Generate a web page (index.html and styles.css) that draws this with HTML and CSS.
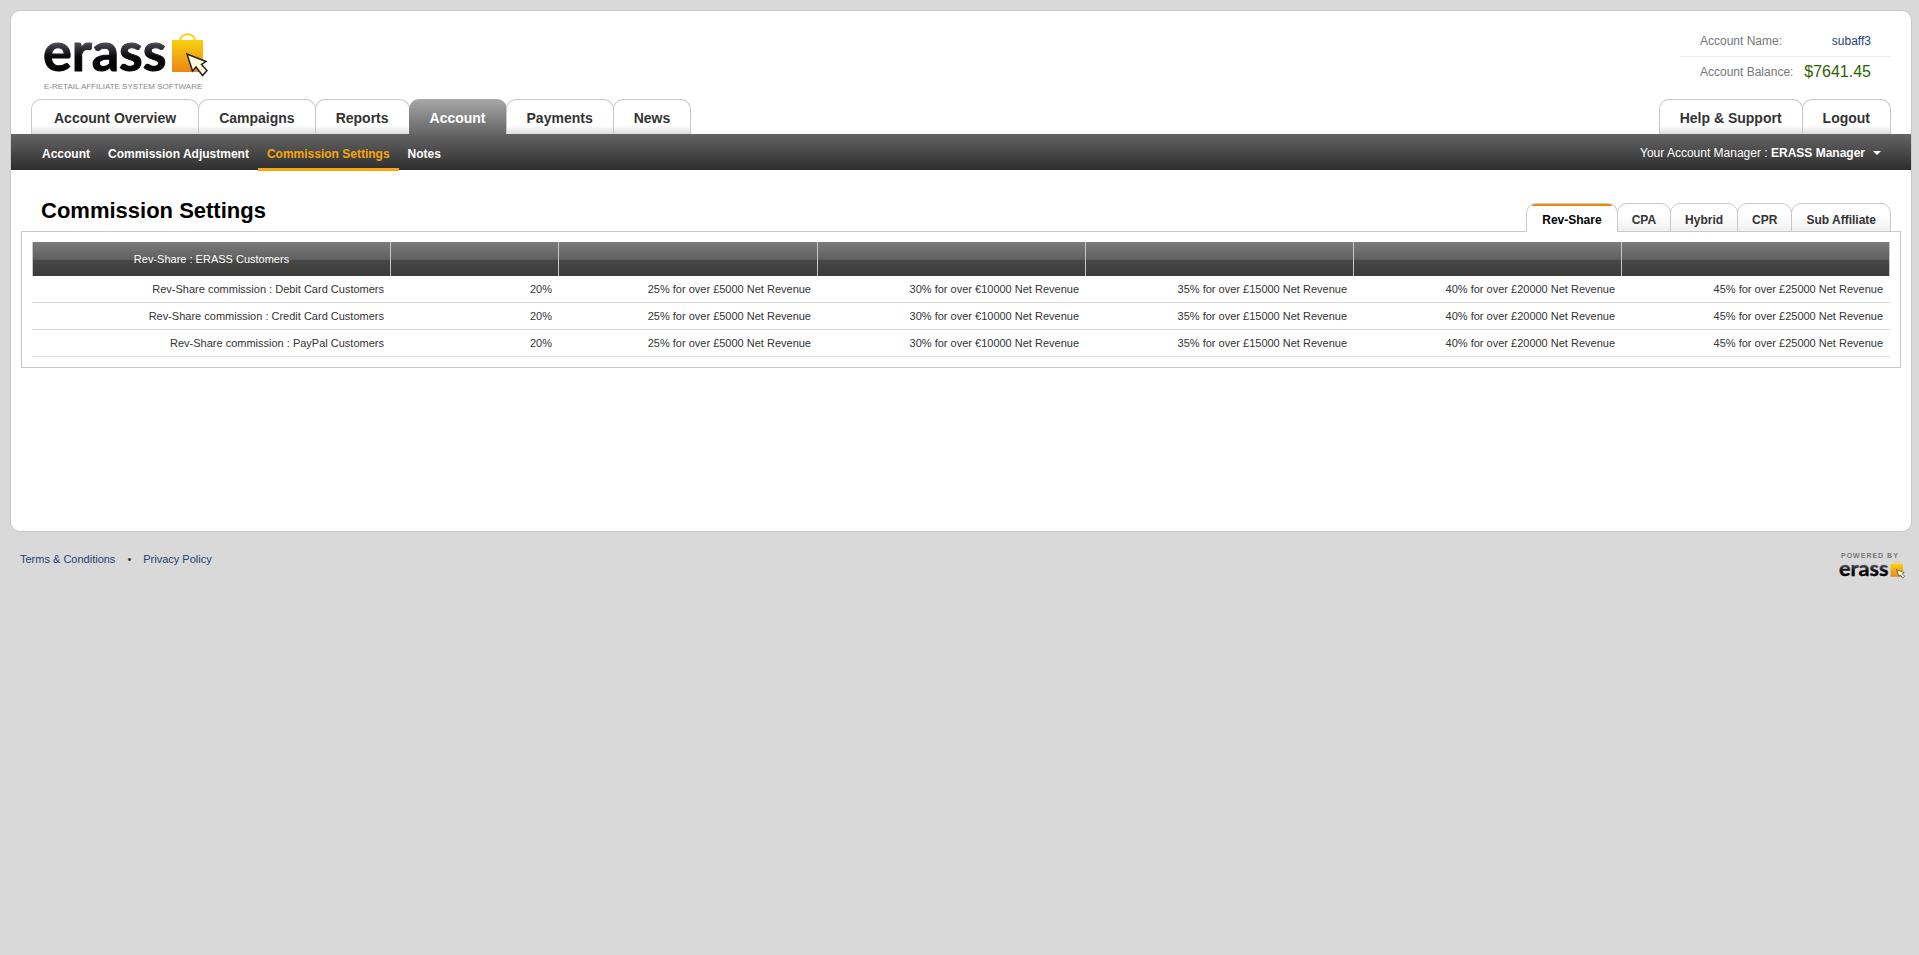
FILE: index.html
```html
<!DOCTYPE html>
<html lang="en">
<head>
  <meta charset="UTF-8">
  <meta name="viewport" content="width=device-width, initial-scale=1.0">
  <title>Commission Settings - ERASS</title>
  <link rel="stylesheet" href="styles.css">
</head>
<body>
  <div class="panel">
    <!-- Header -->
    <header class="header">
      <div class="header-top">
        <a href="#" class="logo">
          <svg class="logo-mark" viewBox="0 0 170 50" aria-label="erass" role="img">
            <defs>
              <linearGradient id="ink" x1="0" y1="0" x2="0" y2="1">
                <stop offset="0.35" stop-color="#54565b"/>
                <stop offset="0.6" stop-color="#08080a"/>
                <stop offset="1" stop-color="#000"/>
              </linearGradient>
              <linearGradient id="bag" x1="0" y1="0" x2="0" y2="1">
                <stop offset="0" stop-color="#f8d010"/>
                <stop offset="1" stop-color="#ec8615"/>
              </linearGradient>
            </defs>
            <text class="logo-word" x="0" y="41" fill="url(#ink)" stroke="url(#ink)">erass</text>
            <g id="shopping-bag">
              <path d="M137 11c0-9 15-9 15 0" fill="none" stroke="#f5d414" stroke-width="2"/>
              <path d="M129 10h31v32h-31z" fill="url(#bag)"/>
              <path d="M144 24l5.500 17 3.500-4 6.500 8.500 4.500-5-5.500-6 4.500-3z" fill="#fdf9dc" stroke="#222" stroke-width="1.500"/>
            </g>
          </svg>
          <span class="logo-tagline">E-RETAIL AFFILIATE SYSTEM SOFTWARE</span>
        </a>
        <dl class="account-info">
          <div class="account-row">
            <dt>Account Name:</dt>
            <dd><a href="#">subaff3</a></dd>
          </div>
          <div class="account-row">
            <dt>Account Balance:</dt>
            <dd class="balance">$7641.45</dd>
          </div>
        </dl>
      </div>
      <div class="tab-bar">
        <nav class="tabs">
          <a href="#" class="tab-wide">Account Overview</a>
          <a href="#">Campaigns</a>
          <a href="#">Reports</a>
          <a href="#" class="active">Account</a>
          <a href="#">Payments</a>
          <a href="#">News</a>
        </nav>
        <nav class="tabs">
          <a href="#">Help &amp; Support</a>
          <a href="#">Logout</a>
        </nav>
      </div>
    </header>

    <!-- Sub navigation -->
    <div class="subbar">
      <nav class="subnav">
        <a href="#">Account</a>
        <a href="#">Commission Adjustment</a>
        <a href="#" class="active">Commission Settings</a>
        <a href="#">Notes</a>
      </nav>
      <button type="button" class="manager">
        <span>Your Account Manager : <b>ERASS Manager</b></span>
        <svg class="caret" viewBox="0 0 8 4"><path d="M0 0h8L4 4z" fill="#fff"/></svg>
      </button>
    </div>

    <!-- Content -->
    <main class="content">
      <div class="content-head">
        <h1>Commission Settings</h1>
        <nav class="page-tabs">
          <a href="#" class="active">Rev-Share</a>
          <a href="#">CPA</a>
          <a href="#">Hybrid</a>
          <a href="#">CPR</a>
          <a href="#">Sub Affiliate</a>
        </nav>
      </div>
      <div class="box">
        <table class="commission">
          <colgroup>
            <col class="col-name">
            <col class="col-rate">
            <col class="col-first">
            <col span="4">
          </colgroup>
          <thead>
            <tr>
              <th>Rev-Share : ERASS Customers</th>
              <th></th>
              <th></th>
              <th></th>
              <th></th>
              <th></th>
              <th></th>
            </tr>
          </thead>
          <tbody>
            <tr>
              <td>Rev-Share commission : Debit Card Customers</td>
              <td>20%</td>
              <td>25% for over £5000 Net Revenue</td>
              <td>30% for over €10000 Net Revenue</td>
              <td>35% for over £15000 Net Revenue</td>
              <td>40% for over £20000 Net Revenue</td>
              <td>45% for over £25000 Net Revenue</td>
            </tr>
            <tr>
              <td>Rev-Share commission : Credit Card Customers</td>
              <td>20%</td>
              <td>25% for over £5000 Net Revenue</td>
              <td>30% for over €10000 Net Revenue</td>
              <td>35% for over £15000 Net Revenue</td>
              <td>40% for over £20000 Net Revenue</td>
              <td>45% for over £25000 Net Revenue</td>
            </tr>
            <tr>
              <td>Rev-Share commission : PayPal Customers</td>
              <td>20%</td>
              <td>25% for over £5000 Net Revenue</td>
              <td>30% for over €10000 Net Revenue</td>
              <td>35% for over £15000 Net Revenue</td>
              <td>40% for over £20000 Net Revenue</td>
              <td>45% for over £25000 Net Revenue</td>
            </tr>
          </tbody>
        </table>
      </div>
    </main>
  </div>

  <!-- Footer -->
  <footer class="footer">
    <div class="footer-links">
      <a href="#">Terms &amp; Conditions</a>
      <span>•</span>
      <a href="#">Privacy Policy</a>
    </div>
    <a href="#" class="powered">
      <span class="powered-label">POWERED BY</span>
      <svg class="powered-mark" viewBox="0 0 170 50" aria-label="erass" role="img">
        <text class="logo-word" x="0" y="41" fill="url(#ink)" stroke="url(#ink)">erass</text>
        <use href="#shopping-bag"/>
      </svg>
    </a>
  </footer>
</body>
</html>
```
FILE: styles.css
```css
:root {
  --page: #d9d9d9;
  --line: #c8c8c8;
  --text: #333;
  --link: #1c3f75;
  --accent: #f9a60a;
}
* {
  box-sizing: border-box;
}
body {
  margin: 0;
  padding: 10px 7px 0 10px;
  background: var(--page);
  color: var(--text);
  font-family: "Liberation Sans", Arial, sans-serif;
  font-size: 11px;
}
a {
  color: var(--link);
  text-decoration: none;
}
.panel {
  background: #fff;
  border: 1px solid var(--line);
  border-radius: 10px;
}
/* Header */
.header {
  padding: 0 20px;
}
.header-top {
  display: flex;
  justify-content: space-between;
  height: 88px;
}
.logo {
  display: flex;
  flex-direction: column;
  padding: 19px 0 0 12px;
}
.logo-mark {
  width: 170px;
  height: 50px;
  overflow: visible;
}
.logo-word {
  font-family: Lato, sans-serif;
  font-size: 54px;
  font-weight: 700;
  stroke-width: 1px;
}
.logo-tagline {
  margin-top: 2px;
  padding-left: 1px;
  color: #888;
  font-size: 8px;
  line-height: 10px;
}
.account-info {
  width: 211px;
  margin: 15px 0 0;
  color: #777;
  font-size: 12px;
}
.account-row {
  display: flex;
  align-items: center;
  justify-content: space-between;
  height: 30px;
  padding: 0 20px;
}
.account-row + .account-row {
  border-top: 1px solid #ececec;
}
.account-row dd {
  margin: 0;
}
.account-row .balance {
  color: #2c6300;
  font-size: 16px;
}
/* Main tabs */
.tab-bar {
  display: flex;
  justify-content: space-between;
}
.tabs {
  display: flex;
}
.tabs a {
  height: 35px;
  padding: 0 20px;
  border: 1px solid var(--line);
  border-bottom: 0;
  border-radius: 10px 10px 0 0;
  background: linear-gradient(#fff 75%, #ddd);
  color: var(--text);
  font-size: 14px;
  font-weight: 700;
  line-height: 37px;
}
.tabs a + a {
  margin-left: -1px;
}
.tabs .tab-wide {
  padding: 0 22px;
}
.tabs .active {
  border-color: transparent;
  background: linear-gradient(#a8a8a8, #656565) border-box;
  color: #fff;
}
/* Dark sub navigation */
.subbar {
  display: flex;
  justify-content: space-between;
  height: 36px;
  padding: 0 30px 0 22px;
  background: linear-gradient(#646464, #2e2e2e);
}
.subnav {
  display: flex;
}
.subnav a {
  height: 37px;
  padding: 0 9px;
  color: #fff;
  font-size: 12px;
  font-weight: 700;
  line-height: 40px;
}
.subnav .active {
  border-bottom: 3px solid var(--accent);
  color: var(--accent);
}
.manager {
  display: flex;
  align-items: center;
  gap: 8px;
  padding: 2px 0 0;
  border: 0;
  background: none;
  color: #fff;
  font-family: inherit;
  font-size: 12px;
  cursor: pointer;
}
.caret {
  width: 8px;
  height: 4px;
}
/* Content */
.content {
  min-height: 361px;
  padding: 0 10px;
}
.content-head {
  position: relative;
  display: flex;
  align-items: flex-end;
  justify-content: space-between;
  height: 62px;
  padding: 0 10px 0 20px;
}
h1 {
  margin: 0;
  padding-bottom: 8px;
  color: #000;
  font-size: 22px;
  line-height: 26px;
}
.page-tabs {
  display: flex;
}
.page-tabs a {
  height: 29px;
  padding: 0 14px;
  border: 1px solid var(--line);
  border-radius: 10px 10px 0 0;
  background: linear-gradient(#fff 40%, #f0f0f0);
  color: var(--text);
  font-size: 12px;
  font-weight: 700;
  line-height: 32px;
}
.page-tabs a + a {
  margin-left: -1px;
}
.page-tabs .active {
  padding: 0 15px;
  border-bottom-color: #fff;
  background: linear-gradient(#ea8a0a, #ea8a0a) top / calc(100% - 10px) 2px no-repeat #fff;
  color: #000;
}
.box {
  margin-top: -1px;
  padding: 10px;
  border: 1px solid var(--line);
}
/* Commission table */
.commission {
  width: 100%;
  table-layout: fixed;
  border-spacing: 0;
}
.col-name {
  width: 359px;
}
.col-rate {
  width: 168px;
}
.col-first {
  width: 259px;
}
.commission th {
  height: 34px;
  padding: 0;
  border-right: 1px solid var(--line);
  background: linear-gradient(#7b7b7b, #5e5e5e 54%, #474747 54%, #3b3b3b);
  color: #fff;
  font-weight: 400;
}
.commission th:first-child {
  border-left: 1px solid var(--line);
}
.commission td {
  height: 27px;
  padding: 0 7px;
  border-bottom: 1px solid #dadada;
  text-align: right;
}
/* Footer */
.footer {
  display: flex;
  justify-content: space-between;
  padding: 19px 5px 0 10px;
}
.footer-links {
  display: flex;
  gap: 12px;
  line-height: 17px;
}
.powered {
  display: flex;
  flex-direction: column;
}
.powered-label {
  padding-left: 2px;
  color: #777;
  font-size: 7px;
  font-weight: 700;
  letter-spacing: 1px;
  line-height: 9px;
}
.powered-mark {
  width: 68px;
  height: 20px;
  overflow: visible;
}
```
